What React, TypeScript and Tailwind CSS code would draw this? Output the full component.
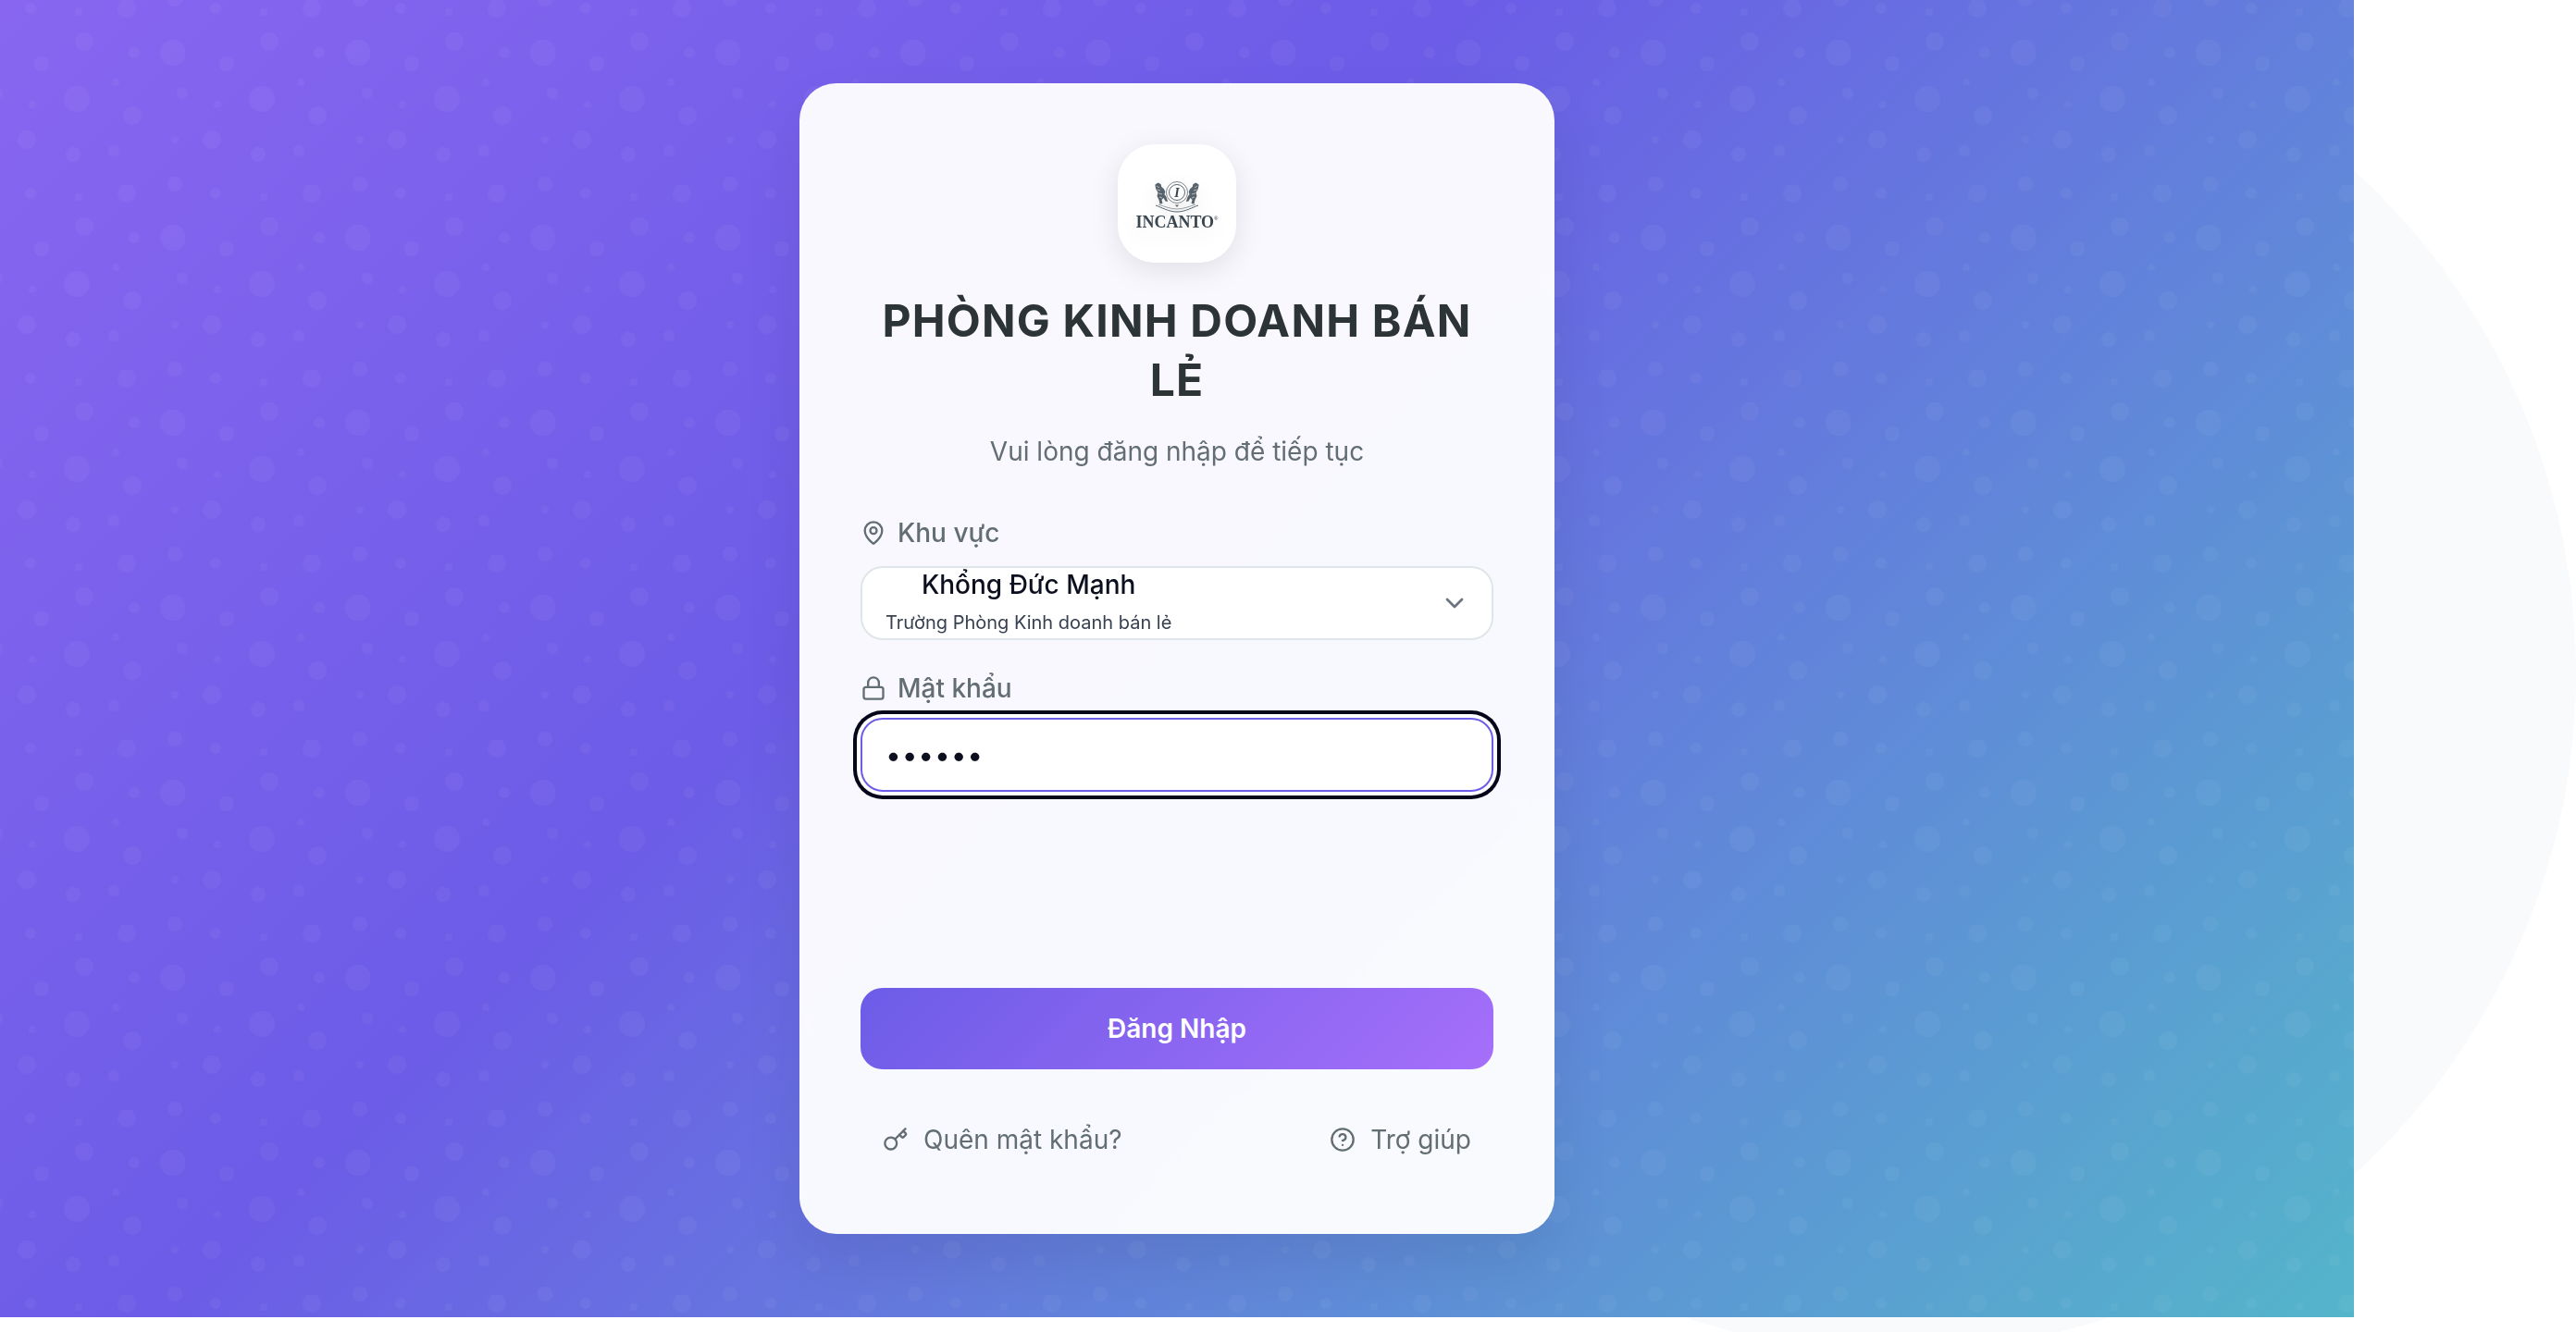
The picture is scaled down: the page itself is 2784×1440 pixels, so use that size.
import { ChevronDown, CircleHelp, Key, Lock, MapPin } from "lucide-react";

function Bubbles() {
  const dots = [
    [91, 45, 10], [145, 57, 6], [187, 57, 14], [45, 69, 8], [125, 89, 4], [83, 107, 14],
    [197, 101, 6], [-3, 101, 6], [35, 113, 4], [143, 125, 10], [29, 151, 10], [189, 151, 4],
    [79, 167, 8], [123, 163, 6], [189, 199, 8], [189, -1, 8], [33, 9, 6], [137, 9, 10], [85, 13, 4],
  ];
  return (
    <svg className="absolute inset-0 h-full w-full">
      <defs>
        <pattern id="bubbles" width="200" height="200" patternUnits="userSpaceOnUse">
          {dots.map(([x, y, r], i) => (
            <circle key={i} cx={x} cy={y} r={r} fill="#fff" fillOpacity="0.04" />
          ))}
        </pattern>
      </defs>
      <rect width="100%" height="100%" fill="url(#bubbles)" />
    </svg>
  );
}

function Lion({ flip }: { flip?: boolean }) {
  return (
    <g transform={flip ? "translate(50 0) scale(-1 1)" : undefined}>
      <path
        d="M1.500 3.500 4.500 1.500 7.500 3l.8 3 2.400 2 1.600 3-.8 3 2 3 1.600 5-2.600-.5-2-3.500-2 2 1 4-3 .5-1-4.500-2-4 1-4-2-3-.9-3.500Z"
        fill="#56626c"
      />
      <path d="M3 5 6 7M3.500 9 7 10M5 13l4 1M6 17l3 1" stroke="#fff" strokeWidth="0.7" opacity="0.8" />
    </g>
  );
}

function Logo() {
  return (
    <div className="flex flex-col items-center pt-[3px] drop-shadow-[0_8px_10px_rgba(0,0,0,0.07)]">
      <svg viewBox="0 0 50 35" className="h-[35px] w-[50px]" fill="none">
        <Lion />
        <Lion flip />
        <circle cx="25" cy="12" r="11.500" fill="#fff" stroke="#5a656f" strokeWidth="0.8" />
        <circle cx="25" cy="12" r="8.500" stroke="#46525c" strokeWidth="0.9" />
        <text x="25" y="17" textAnchor="middle" fontFamily="Liberation Serif, serif" fontWeight="700" fontStyle="italic" fontSize="14" fill="#36424c">
          I
        </text>
        <path d="M2 26c6 2 14 7 23 7s17-5 23-7" stroke="#5a656f" strokeWidth="1" />
        <path d="M5 25c6 2 13 5 20 5s14-3 20-5" stroke="#7b858d" strokeWidth="0.8" />
        <path d="M23 25.500h4l-2 2.500Z" fill="#5a656f" />
      </svg>
      <div className="mt-[1px] flex items-start font-['Liberation_Serif',serif] text-[18px] leading-[16px] font-bold text-[#3a4650]">
        INCANTO<span className="text-[6px] leading-[8px]">®</span>
      </div>
    </div>
  );
}

export default function App() {
  return (
    <div className="relative h-[1440px] w-full overflow-hidden bg-white font-['Inter',sans-serif]">
      <div className="absolute top-[-7px] right-0 h-[1468px] w-[1468px] rounded-full bg-[#f9fafb]" />

      <main className="relative flex h-[1424px] w-[2544px] items-center justify-center bg-[linear-gradient(135deg,#8866f0_0%,#6c5ce7_40%,#54b5ca_100%)]">
        <Bubbles />

        {/* Login card */}
        <div className="relative flex h-[1244px] w-[816px] flex-col rounded-[40px] border-2 border-white/20 bg-white/[0.955] px-[64px] pt-[64px] shadow-[0_32px_64px_rgba(0,0,0,0.08)] backdrop-blur-[20px]">
          <div className="mx-auto flex h-[128px] w-[128px] items-center justify-center rounded-[40px] bg-white shadow-[0_8px_32px_rgba(0,0,0,0.1)]">
            <Logo />
          </div>

          <h1 className="mt-[31px] text-center text-[48px] leading-[64px] font-bold tracking-[1.2px] text-[#2d3436]">
            PHÒNG KINH DOANH BÁN LẺ
          </h1>
          <p className="mt-[23px] text-center text-[28px] leading-[44px] text-[#636e72]">
            Vui lòng đăng nhập để tiếp tục
          </p>

          <label className="mt-[44px] flex h-[44px] items-center gap-[12px] text-[28px] font-medium text-[#636e72]">
            <MapPin size={28} strokeWidth={2} />
            Khu vực
          </label>
          <div className="mt-[14px] flex h-[80px] items-start justify-between rounded-[24px] border-2 border-[#dfe6e9] bg-white pr-[24px] pl-[25px]">
            <div className="flex flex-col">
              <span className="ml-[39px] text-[28px] leading-[36px] font-medium text-[#0b0f1e]">Khổng Đức Mạnh</span>
              <span className="mt-[8px] text-[20px] leading-[30px] text-[#374151]">Trường Phòng Kinh doanh bán lẻ</span>
            </div>
            <ChevronDown size={32} strokeWidth={2} className="mt-[22px] text-[#6b7280]" />
          </div>

          <label className="mt-[30px] flex h-[44px] items-center gap-[12px] text-[28px] font-medium text-[#636e72]">
            <Lock size={28} strokeWidth={2} />
            Mật khẩu
          </label>
          <input
            type="password"
            readOnly
            value="123456"
            className="mt-[10px] h-[80px] w-full rounded-[24px] border-2 border-[#6c5ce7] bg-white px-[25px] text-[30px] tracking-[0.8px] text-[#0b0f1e] shadow-[0_0_0_4px_#fff,0_0_0_8px_#05061a] outline-none"
          />

          <button className="mt-[212px] h-[88px] w-full rounded-[24px] bg-[linear-gradient(135deg,#6c5ce7,#a66ffa)] text-[28px] font-semibold text-white">
            Đăng Nhập
          </button>

          <div className="mt-[40px] flex h-[72px] items-center justify-between px-[24px] text-[28px] text-[#636e72]">
            <a className="flex items-center gap-[16px]">
              <Key size={28} strokeWidth={2} />
              Quên mật khẩu?
            </a>
            <a className="flex items-center gap-[16px]">
              <CircleHelp size={28} strokeWidth={2} />
              Trợ giúp
            </a>
          </div>
        </div>
      </main>
    </div>
  );
}
